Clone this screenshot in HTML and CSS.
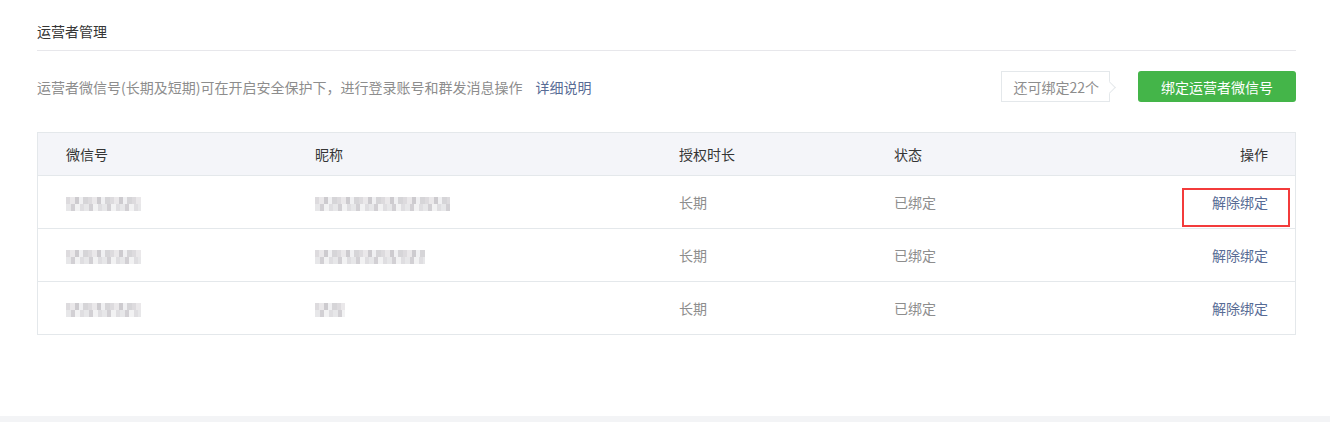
FILE: index.html
```html
<!DOCTYPE html>
<html lang="zh-CN">
<head>
    <meta charset="UTF-8">
    <title>运营者管理</title>
<link rel="stylesheet" href="styles.css">
</head>
<body>
    <div class="page">
        <div class="page-hd">运营者管理</div>

        <div class="toolbar">
            <div class="desc">
                运营者微信号(长期及短期)可在开启安全保护下，进行登录账号和群发消息操作
                <a class="link" href="#">详细说明</a>
            </div>
            <div class="tool-right">
                <div class="quota">还可绑定22个</div>
                <button class="btn-green">绑定运营者微信号</button>
            </div>
        </div>

        <table class="op-table">
            <thead>
                <tr>
                    <th class="col-id">微信号</th>
                    <th class="col-nick">昵称</th>
                    <th class="col-time">授权时长</th>
                    <th class="col-state">状态</th>
                    <th class="col-op">操作</th>
                </tr>
            </thead>
            <tbody>
                <tr>
                    <td><span class="mosaic m-a"></span></td>
                    <td><span class="mosaic m-long"></span></td>
                    <td>长期</td>
                    <td>已绑定</td>
                    <td class="col-op"><span class="mark"><a class="link" href="#">解除绑定</a></span></td>
                </tr>
                <tr>
                    <td><span class="mosaic m-b"></span></td>
                    <td><span class="mosaic m-mid"></span></td>
                    <td>长期</td>
                    <td>已绑定</td>
                    <td class="col-op"><a class="link" href="#">解除绑定</a></td>
                </tr>
                <tr>
                    <td><span class="mosaic m-a"></span></td>
                    <td><span class="mosaic m-short"></span></td>
                    <td>长期</td>
                    <td>已绑定</td>
                    <td class="col-op"><a class="link" href="#">解除绑定</a></td>
                </tr>
            </tbody>
        </table>
    </div>
    <div class="footer"></div>
</body>
</html>
```

FILE: styles.css
```css
body {
    margin: 0;
    font-family: "Noto Sans CJK SC", "Microsoft YaHei", sans-serif;
    font-size: 14px;
    color: #353535;
    background: #fff;
}

.page {
    height: 416px;
    padding: 0 34px 0 37px;
    box-sizing: border-box;
}

.page-hd {
    padding-top: 20px;
    padding-bottom: 8px;
    line-height: 22px;
    border-bottom: 1px solid #e7e7eb;
}

.toolbar {
    display: flex;
    justify-content: space-between;
    align-items: center;
    margin-top: 20px;
    height: 31px;
}

.desc {
    color: #8d8d8d;
}

.link {
    color: #576b95;
    text-decoration: none;
}

.desc .link {
    margin-left: 10px;
}

.tool-right {
    display: flex;
    align-items: center;
    gap: 28px;
}

.quota {
    position: relative;
    height: 31px;
    line-height: 31px;
    padding: 0 10px 0 11px;
    border: 1px solid #e4e8eb;
    box-sizing: border-box;
    color: #8d8d8d;
    background: #fff;
}

.quota::after {
    content: "";
    position: absolute;
    right: -5px;
    top: 11px;
    width: 8px;
    height: 8px;
    background: #fff;
    border-top: 1px solid #e4e8eb;
    border-right: 1px solid #e4e8eb;
    transform: rotate(45deg);
}

.btn-green {
    width: 158px;
    height: 31px;
    border: none;
    border-radius: 3px;
    background: #44b549;
    color: #fff;
    font-family: inherit;
    font-size: 14px;
    cursor: pointer;
}

.op-table {
    width: 100%;
    margin-top: 30px;
    border-collapse: collapse;
    border: 1px solid #e4e8eb;
}

.op-table th {
    height: 42px;
    padding: 0;
    text-align: left;
    font-weight: normal;
    color: #353535;
    background: #f4f5f9;
    border-bottom: 1px solid #e4e8eb;
}

.op-table td {
    height: 52px;
    padding: 0;
    color: #8d8d8d;
    border-bottom: 1px solid #e4e8eb;
}

.op-table th:first-child,
.op-table td:first-child {
    padding-left: 28px;
}

.col-id { width: 249px; }
.col-nick { width: 364px; }
.col-time { width: 215px; }

.op-table .col-op {
    text-align: right;
    padding-right: 27px;
}

.mark {
    position: relative;
}

.mark::after {
    content: "";
    position: absolute;
    left: -30px;
    right: -22px;
    top: -4px;
    bottom: -15px;
    border: 2px solid #f33b3b;
}

.mosaic {
    display: inline-block;
    height: 14px;
    vertical-align: middle;
    opacity: 0.75;
    background:
        repeating-linear-gradient(90deg, #d2cfd3 0 4px, #e3e1e4 4px 9px, #bdbac0 9px 13px, #ecebee 13px 17px, #c9c7cc 17px 22px) top / 100% 7px no-repeat,
        repeating-linear-gradient(90deg, #e0dfe2 0 5px, #c4c1c6 5px 9px, #eeeef0 9px 14px, #d5d3d8 14px 18px) bottom / 100% 7px no-repeat;
}

.m-a { width: 75px; }
.m-b { width: 75px; }
.m-long { width: 135px; }
.m-mid { width: 110px; }
.m-short { width: 30px; }

.footer {
    height: 6px;
    background: #f3f4f6;
}
```
